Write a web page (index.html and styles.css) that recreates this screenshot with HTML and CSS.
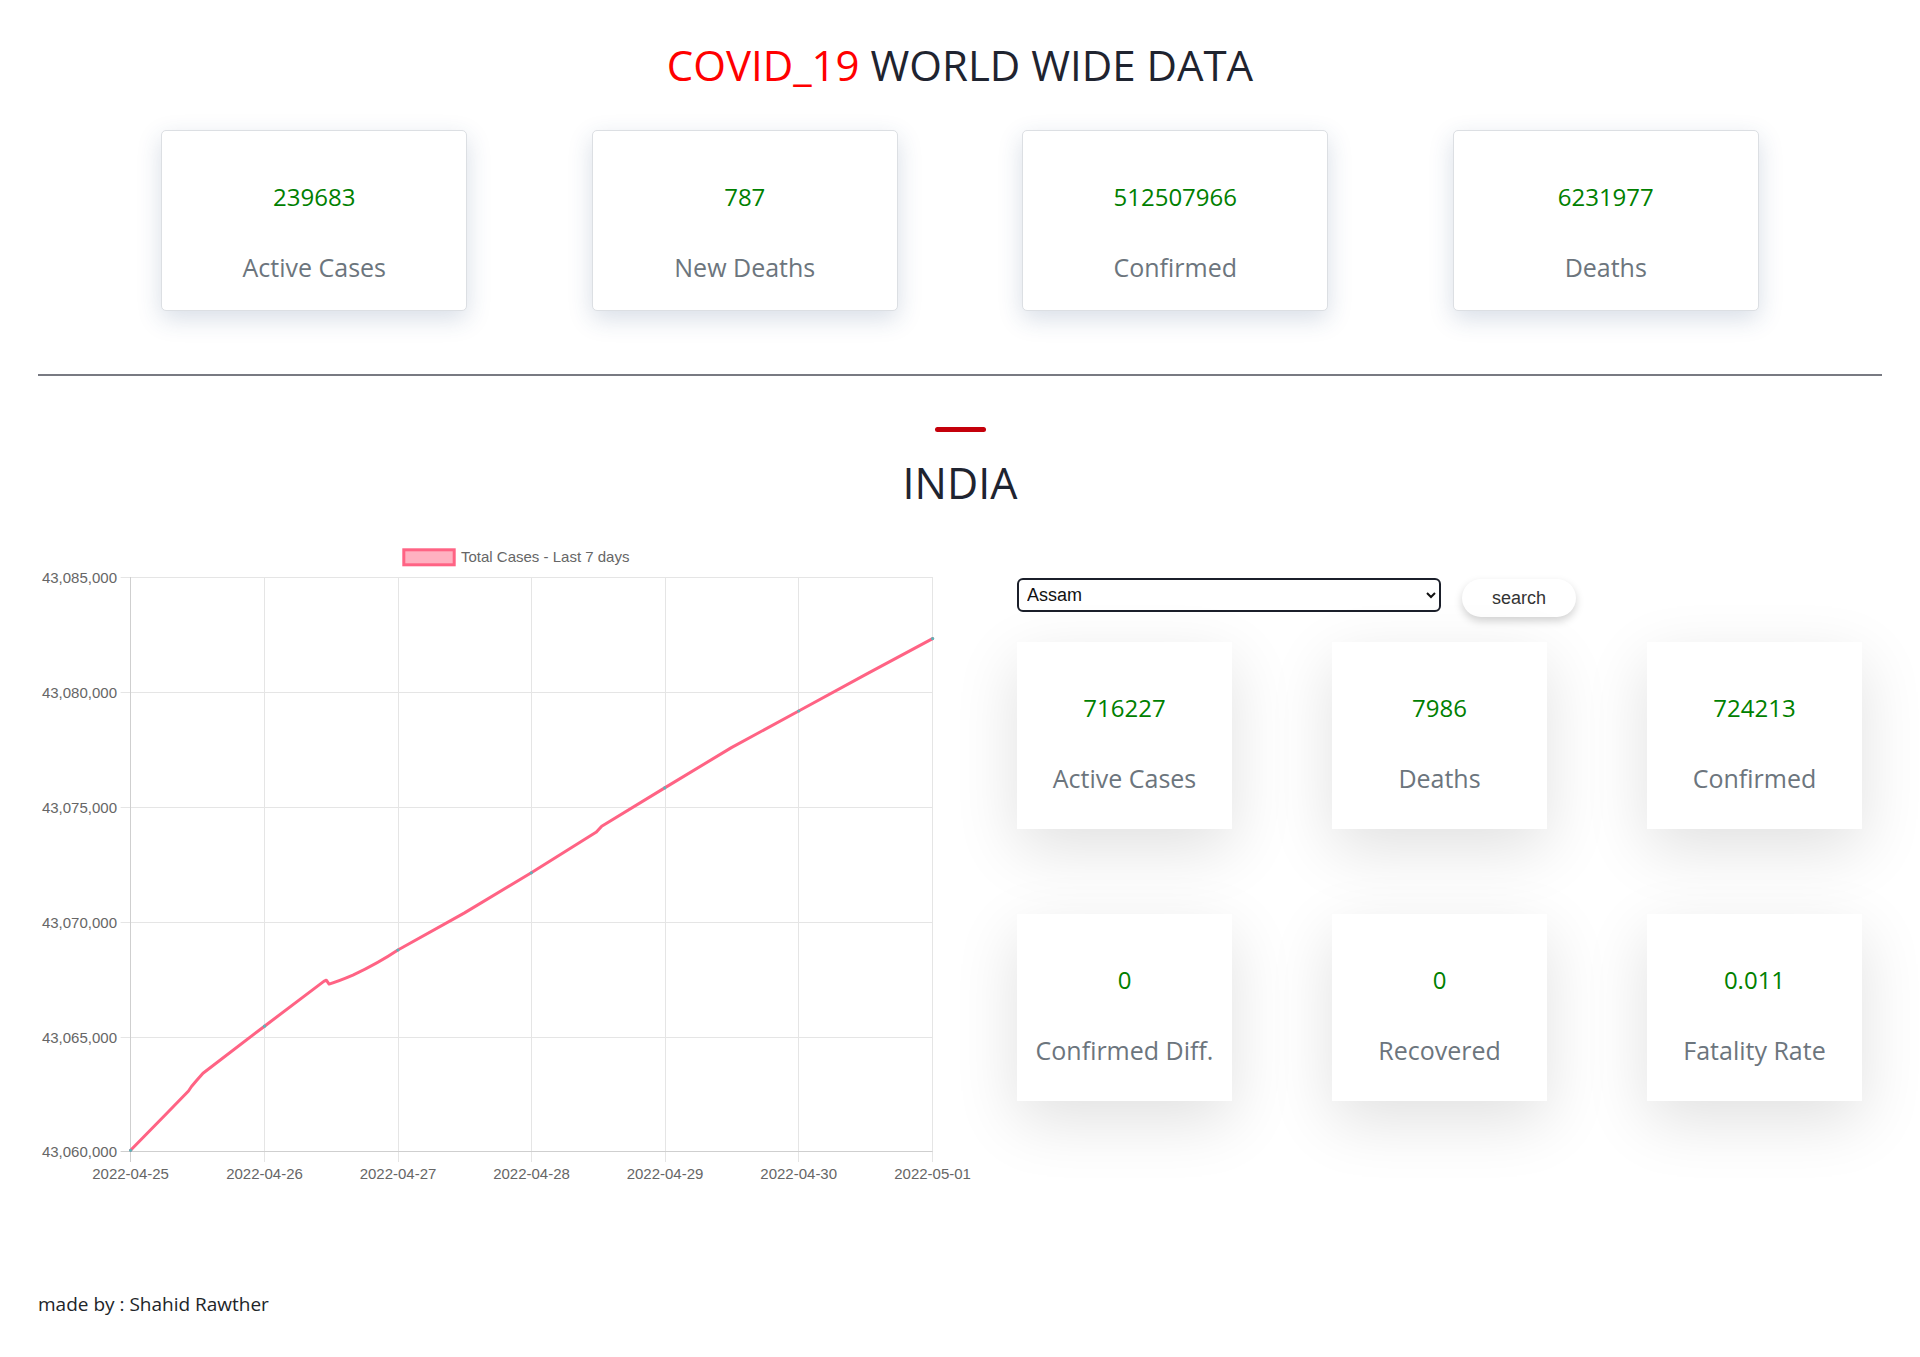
FILE: index.html
```html
<!DOCTYPE html>
<html lang="en">
<head>
<meta charset="utf-8">
<title>COVID_19 World Wide Data</title>
<link rel="stylesheet" href="styles.css">
</head>
<body>
<header class="page-head">
  <h1 class="title"><span class="title-red">COVID_19</span> WORLD WIDE DATA</h1>
</header>

<section class="world">
  <div class="world-col"><div class="wcard"><div class="num">239683</div><div class="lbl">Active Cases</div></div></div>
  <div class="world-col"><div class="wcard"><div class="num">787</div><div class="lbl">New Deaths</div></div></div>
  <div class="world-col"><div class="wcard"><div class="num">512507966</div><div class="lbl">Confirmed</div></div></div>
  <div class="world-col"><div class="wcard"><div class="num">6231977</div><div class="lbl">Deaths</div></div></div>
</section>

<hr class="divider">

<section class="country-head">
  <div class="red-bar"></div>
  <h2 class="country">INDIA</h2>
</section>

<main class="country-main">
  <div class="chart">
    <svg width="960" height="650" viewBox="0 0 960 650" xmlns="http://www.w3.org/2000/svg">
      <!-- legend -->
      <rect x="365.8" y="9.8" width="50.4" height="15" fill="#ffb1c1" stroke="#ff6384" stroke-width="3"/>
      <text x="423" y="22.3" class="ax">Total Cases - Last 7 days</text>

      <!-- horizontal grid -->
      <g stroke="#e5e5e5" stroke-width="1">
        <line x1="82.6" y1="37.5" x2="894.6" y2="37.5"/>
        <line x1="82.6" y1="152.5" x2="894.6" y2="152.5"/>
        <line x1="82.6" y1="267.5" x2="894.6" y2="267.5"/>
        <line x1="82.6" y1="382.5" x2="894.6" y2="382.5"/>
        <line x1="82.6" y1="497.5" x2="894.6" y2="497.5"/>
      </g>
      <!-- vertical grid -->
      <g stroke="#e5e5e5" stroke-width="1">
        <line x1="226.5" y1="37" x2="226.5" y2="622"/>
        <line x1="360.5" y1="37" x2="360.5" y2="622"/>
        <line x1="493.5" y1="37" x2="493.5" y2="622"/>
        <line x1="627.5" y1="37" x2="627.5" y2="622"/>
        <line x1="760.5" y1="37" x2="760.5" y2="622"/>
        <line x1="894.5" y1="37" x2="894.5" y2="622"/>
      </g>
      <!-- axes -->
      <g stroke="#cfcfcf" stroke-width="1">
        <line x1="92.5" y1="37" x2="92.5" y2="622"/>
        <line x1="82.6" y1="611.5" x2="894.6" y2="611.5"/>
      </g>

      <!-- y labels -->
      <g class="ax" text-anchor="end">
        <text x="79" y="42.5">43,085,000</text>
        <text x="79" y="157.5">43,080,000</text>
        <text x="79" y="272.5">43,075,000</text>
        <text x="79" y="387.5">43,070,000</text>
        <text x="79" y="502.5">43,065,000</text>
        <text x="79" y="616.5">43,060,000</text>
      </g>
      <!-- x labels -->
      <g class="ax" text-anchor="middle">
        <text x="92.6" y="639">2022-04-25</text>
        <text x="226.5" y="639">2022-04-26</text>
        <text x="360" y="639">2022-04-27</text>
        <text x="493.5" y="639">2022-04-28</text>
        <text x="627" y="639">2022-04-29</text>
        <text x="760.7" y="639">2022-04-30</text>
        <text x="894.6" y="639">2022-05-01</text>
      </g>

      <!-- data line -->
      <path d="M92.6 610.3 L129.6 572.5 L150.5 551 L153.5 546.5 L158.8 540.3 L165 533.2 L226.5 486.2 L285.8 441.4 L288.3 440.2 L291.1 444.1 C300 441.5 306 439 314.9 435.2 C330 428 345 420 359.9 410 L426.1 373.1 L493.3 332.8 L558.4 292.1 L563.7 286.2 L626.7 247.9 L693.4 207.6 L760.7 171 L828.4 134.1 L894.6 98.6"
        fill="none" stroke="#ff6384" stroke-width="3" stroke-linejoin="round" stroke-linecap="round"/>
      <g fill="#5db3b8">
        <circle cx="92.6" cy="610.3" r="1.6"/>
        <circle cx="226.5" cy="486.2" r="1.6"/>
        <circle cx="359.9" cy="410" r="1.6"/>
        <circle cx="493.3" cy="332.8" r="1.6"/>
        <circle cx="626.7" cy="247.9" r="1.6"/>
        <circle cx="760.7" cy="171" r="1.6"/>
        <circle cx="894.6" cy="98.6" r="1.6"/>
      </g>
    </svg>
  </div>

  <div class="state-panel">
    <div class="toolbar">
      <select class="state-select">
        <option>Assam</option>
      </select>
      <button class="search-btn" type="button">search</button>
    </div>
    <div class="state-grid">
      <div class="scard"><div class="num">716227</div><div class="lbl">Active Cases</div></div>
      <div class="scard"><div class="num">7986</div><div class="lbl">Deaths</div></div>
      <div class="scard"><div class="num">724213</div><div class="lbl">Confirmed</div></div>
      <div class="scard"><div class="num">0</div><div class="lbl">Confirmed Diff.</div></div>
      <div class="scard"><div class="num">0</div><div class="lbl">Recovered</div></div>
      <div class="scard"><div class="num">0.011</div><div class="lbl">Fatality Rate</div></div>
    </div>
  </div>
</main>

<footer class="footer">made by : Shahid Rawther</footer>
</body>
</html>
```

FILE: styles.css
```css
* { box-sizing: border-box; }

html, body {
  margin: 0;
  padding: 0;
  background: #ffffff;
}

body {
  font-family: "Open Sans", "Noto Sans", "Liberation Sans", sans-serif;
  color: #212529;
  width: 1920px;
  min-height: 1357px;
}

.page-head {
  padding-top: 40px;
  text-align: center;
}

.title {
  margin: 0;
  font-size: 42px;
  line-height: 50px;
  font-weight: 400;
  color: #1f2430;
}

.title-red { color: #ff0000; }

.world {
  margin-top: 40px;
  padding: 0 99px;
  display: grid;
  grid-template-columns: repeat(4, 1fr);
  justify-items: center;
}

.wcard {
  width: 306px;
  height: 181px;
  background: #fff;
  border: 1px solid #dcdfe3;
  border-radius: 5px;
  box-shadow: 0 8px 24px rgba(40, 70, 120, 0.18);
  padding-top: 51px;
  text-align: center;
}

.num {
  font-size: 24px;
  line-height: 30px;
  color: #008000;
}

.lbl {
  margin-top: 40px;
  font-size: 25px;
  line-height: 30px;
  color: #6c757d;
}

.divider {
  margin: 63px 38px 0;
  border: 0;
  border-top: 2px solid #787a82;
  height: 0;
}

.country-head {
  display: flex;
  flex-direction: column;
  align-items: center;
  padding-top: 51px;
}

.red-bar {
  width: 51px;
  height: 5px;
  border-radius: 3px;
  background: #c4000b;
}

.country {
  margin: 26px 0 0;
  font-size: 43px;
  line-height: 50px;
  font-weight: 400;
  color: #1f2430;
}

.country-main {
  margin-top: 32px;
  padding: 0 38px;
  display: flex;
  align-items: flex-start;
}

.chart {
  width: 979px;
  flex: none;
}

.chart svg { display: block; }

.ax {
  font-family: "Liberation Sans", Arial, sans-serif;
  font-size: 15px;
  fill: #666666;
}

.state-panel {
  width: 845px;
  flex: none;
  padding-top: 38px;
}

.toolbar {
  display: flex;
  align-items: flex-start;
  gap: 21px;
}

.state-select {
  width: 424px;
  height: 34px;
  border: 2px solid #1b1f2a;
  border-radius: 6px;
  background: #fff;
  font-family: "Liberation Sans", Arial, sans-serif;
  font-size: 18px;
  color: #111;
  padding: 0 4px;
}

.search-btn {
  margin-top: 1px;
  width: 114px;
  height: 38px;
  border: 0;
  border-radius: 19px;
  background: #fff;
  box-shadow: 0 4px 9px rgba(0, 0, 0, 0.18);
  font-family: "Liberation Sans", Arial, sans-serif;
  font-size: 18px;
  color: #333;
}

.state-grid {
  margin-top: 25px;
  display: grid;
  grid-template-columns: repeat(3, 215px);
  column-gap: 100px;
  row-gap: 85px;
}

.scard {
  height: 187px;
  background: #fff;
  box-shadow: 0 20px 60px rgba(0, 0, 0, 0.12);
  padding-top: 51px;
  text-align: center;
}

.footer {
  padding: 100px 38px 0;
  font-size: 19px;
  line-height: 28px;
  color: #212529;
}
```
